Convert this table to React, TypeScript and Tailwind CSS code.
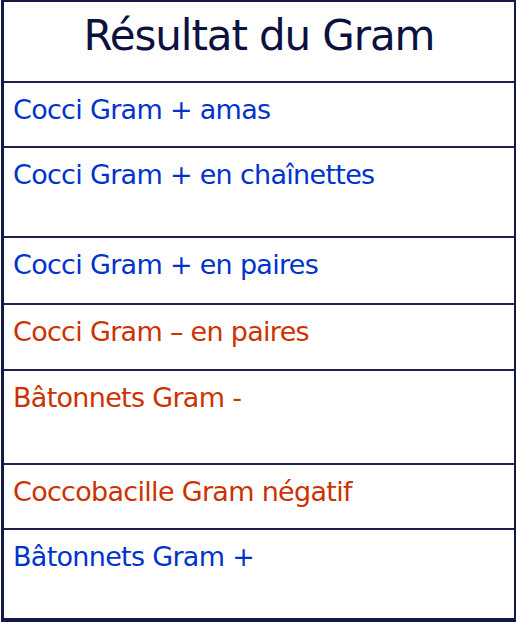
const rows = [
  { label: "Cocci Gram + amas", tone: "blue", h: "h-[65px]" },
  { label: "Cocci Gram + en chaînettes", tone: "blue", h: "h-[90px]" },
  { label: "Cocci Gram + en paires", tone: "blue", h: "h-[67px]" },
  { label: "Cocci Gram – en paires", tone: "red", h: "h-[66px]" },
  { label: "Bâtonnets Gram -", tone: "red", h: "h-[94px]" },
  { label: "Coccobacille Gram négatif", tone: "red", h: "h-[65px]" },
];

export default function App() {
  return (
    <div className="w-[516px] h-[628px] bg-white" style={{ fontFamily: '"DejaVu Sans", Verdana, sans-serif' }}>
      <div className="ml-px w-[515px] border-t-2 border-l-[3px] border-r-2 border-b-4 border-[#141a45] flex flex-col">
        <div className="h-[81px] border-b-2 border-[#1c2150] flex justify-center pt-[9px]">
          <h1 className="text-[42px] leading-[50px] text-[#0b1240] tracking-[-1.1px]">Résultat du Gram</h1>
        </div>
        {rows.map((r) => (
          <div key={r.label} className={`${r.h} border-b-2 border-[#1c2150] pl-[9px] pt-[11px]`}>
            <p
              className={`text-[27px] leading-[32px] tracking-[-0.7px] ${
                r.tone === "blue" ? "text-[#0033cc]" : "text-[#cc3300]"
              }`}
            >
              {r.label}
            </p>
          </div>
        ))}
        <div className="h-[88px] pl-[9px] pt-[11px]">
          <p className="text-[27px] leading-[32px] tracking-[-0.7px] text-[#0033cc]">Bâtonnets Gram +</p>
        </div>
      </div>
    </div>
  );
}
